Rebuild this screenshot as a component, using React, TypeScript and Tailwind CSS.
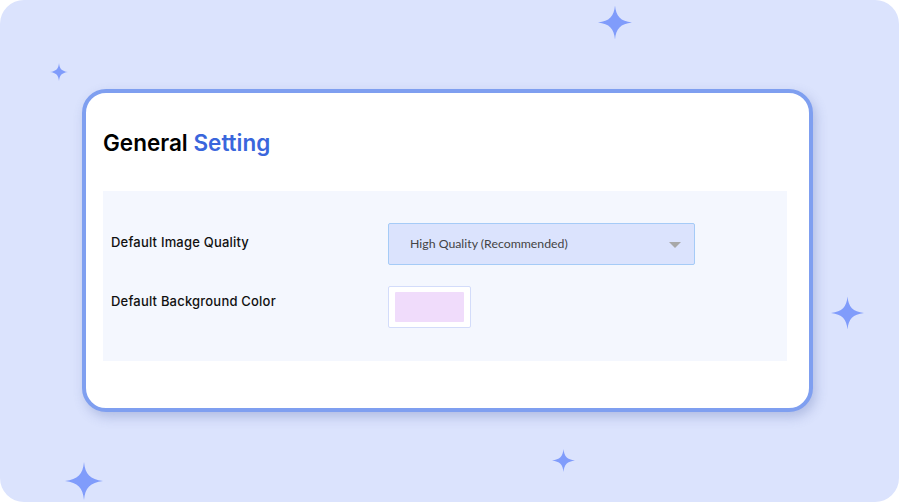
const Star = ({ className }: { className: string }) => (
  <svg className={`absolute ${className}`} viewBox="0 0 100 100" fill="#809cfb">
    <path d="M50 0C53 32 66 46 100 50C66 54 53 68 50 100C47 68 34 54 0 50C34 46 47 32 50 0Z" />
  </svg>
);

export default function App() {
  return (
    <div className="w-[899px] h-[502px] bg-white font-['Inter',sans-serif]">
      <div className="relative w-full h-full overflow-hidden rounded-[24px] bg-[#dbe3fd] pt-[89px] pl-[82px]">
        <Star className="left-[598px] top-[5px] w-[34px] h-[35px]" />
        <Star className="left-[50px] top-[62px] w-[18px] h-[20px]" />
        <Star className="left-[831px] top-[295px] w-[33px] h-[36px]" />
        <Star className="left-[552px] top-[448px] w-[23px] h-[25px]" />
        <Star className="left-[65px] top-[460px] w-[38px] h-[42px]" />

        {/* Settings card */}
        <div className="w-[731px] h-[323px] rounded-[24px] border-4 border-[#7f9ff0] bg-white pt-[33px] pl-[17px] shadow-[3px_5px_12px_rgba(80,100,170,0.3)]">
          <h1 className="text-[22.5px] leading-[33px] font-semibold text-black">
            General <span className="text-[#3a66dc]">Setting</span>
          </h1>

          <div className="mt-[32px] w-[684px] h-[170px] bg-[#f4f7fe] pt-[32px] pl-[8px]">
            <div className="flex items-center">
              <label className="w-[277px] -mt-[2px] text-[13px] tracking-[0.2px] font-medium text-[#111]">Default Image Quality</label>
              <div className="flex items-center justify-between w-[307px] h-[42px] rounded-[2px] border border-[#a5cbf7] bg-[#dbe3fd] pl-[21px] pr-[13px]">
                <span className="font-['Lato',sans-serif] text-[12.3px] text-[#444]">High Quality (Recommended)</span>
                <span className="mt-[2px] border-x-[6px] border-t-[6px] border-x-transparent border-t-[#a8a8a8]" />
              </div>
            </div>
            <div className="flex items-center mt-[21px]">
              <label className="w-[277px] -mt-[10px] text-[13px] tracking-[0.2px] font-medium text-[#111]">Default Background Color</label>
              <div className="flex items-center justify-center w-[83px] h-[42px] rounded-[2px] border border-[#d3dcfa] bg-white">
                <div className="w-[69px] h-[30px] rounded-[1px] bg-[#f0dcfb]" />
              </div>
            </div>
          </div>
        </div>
      </div>
    </div>
  );
}
